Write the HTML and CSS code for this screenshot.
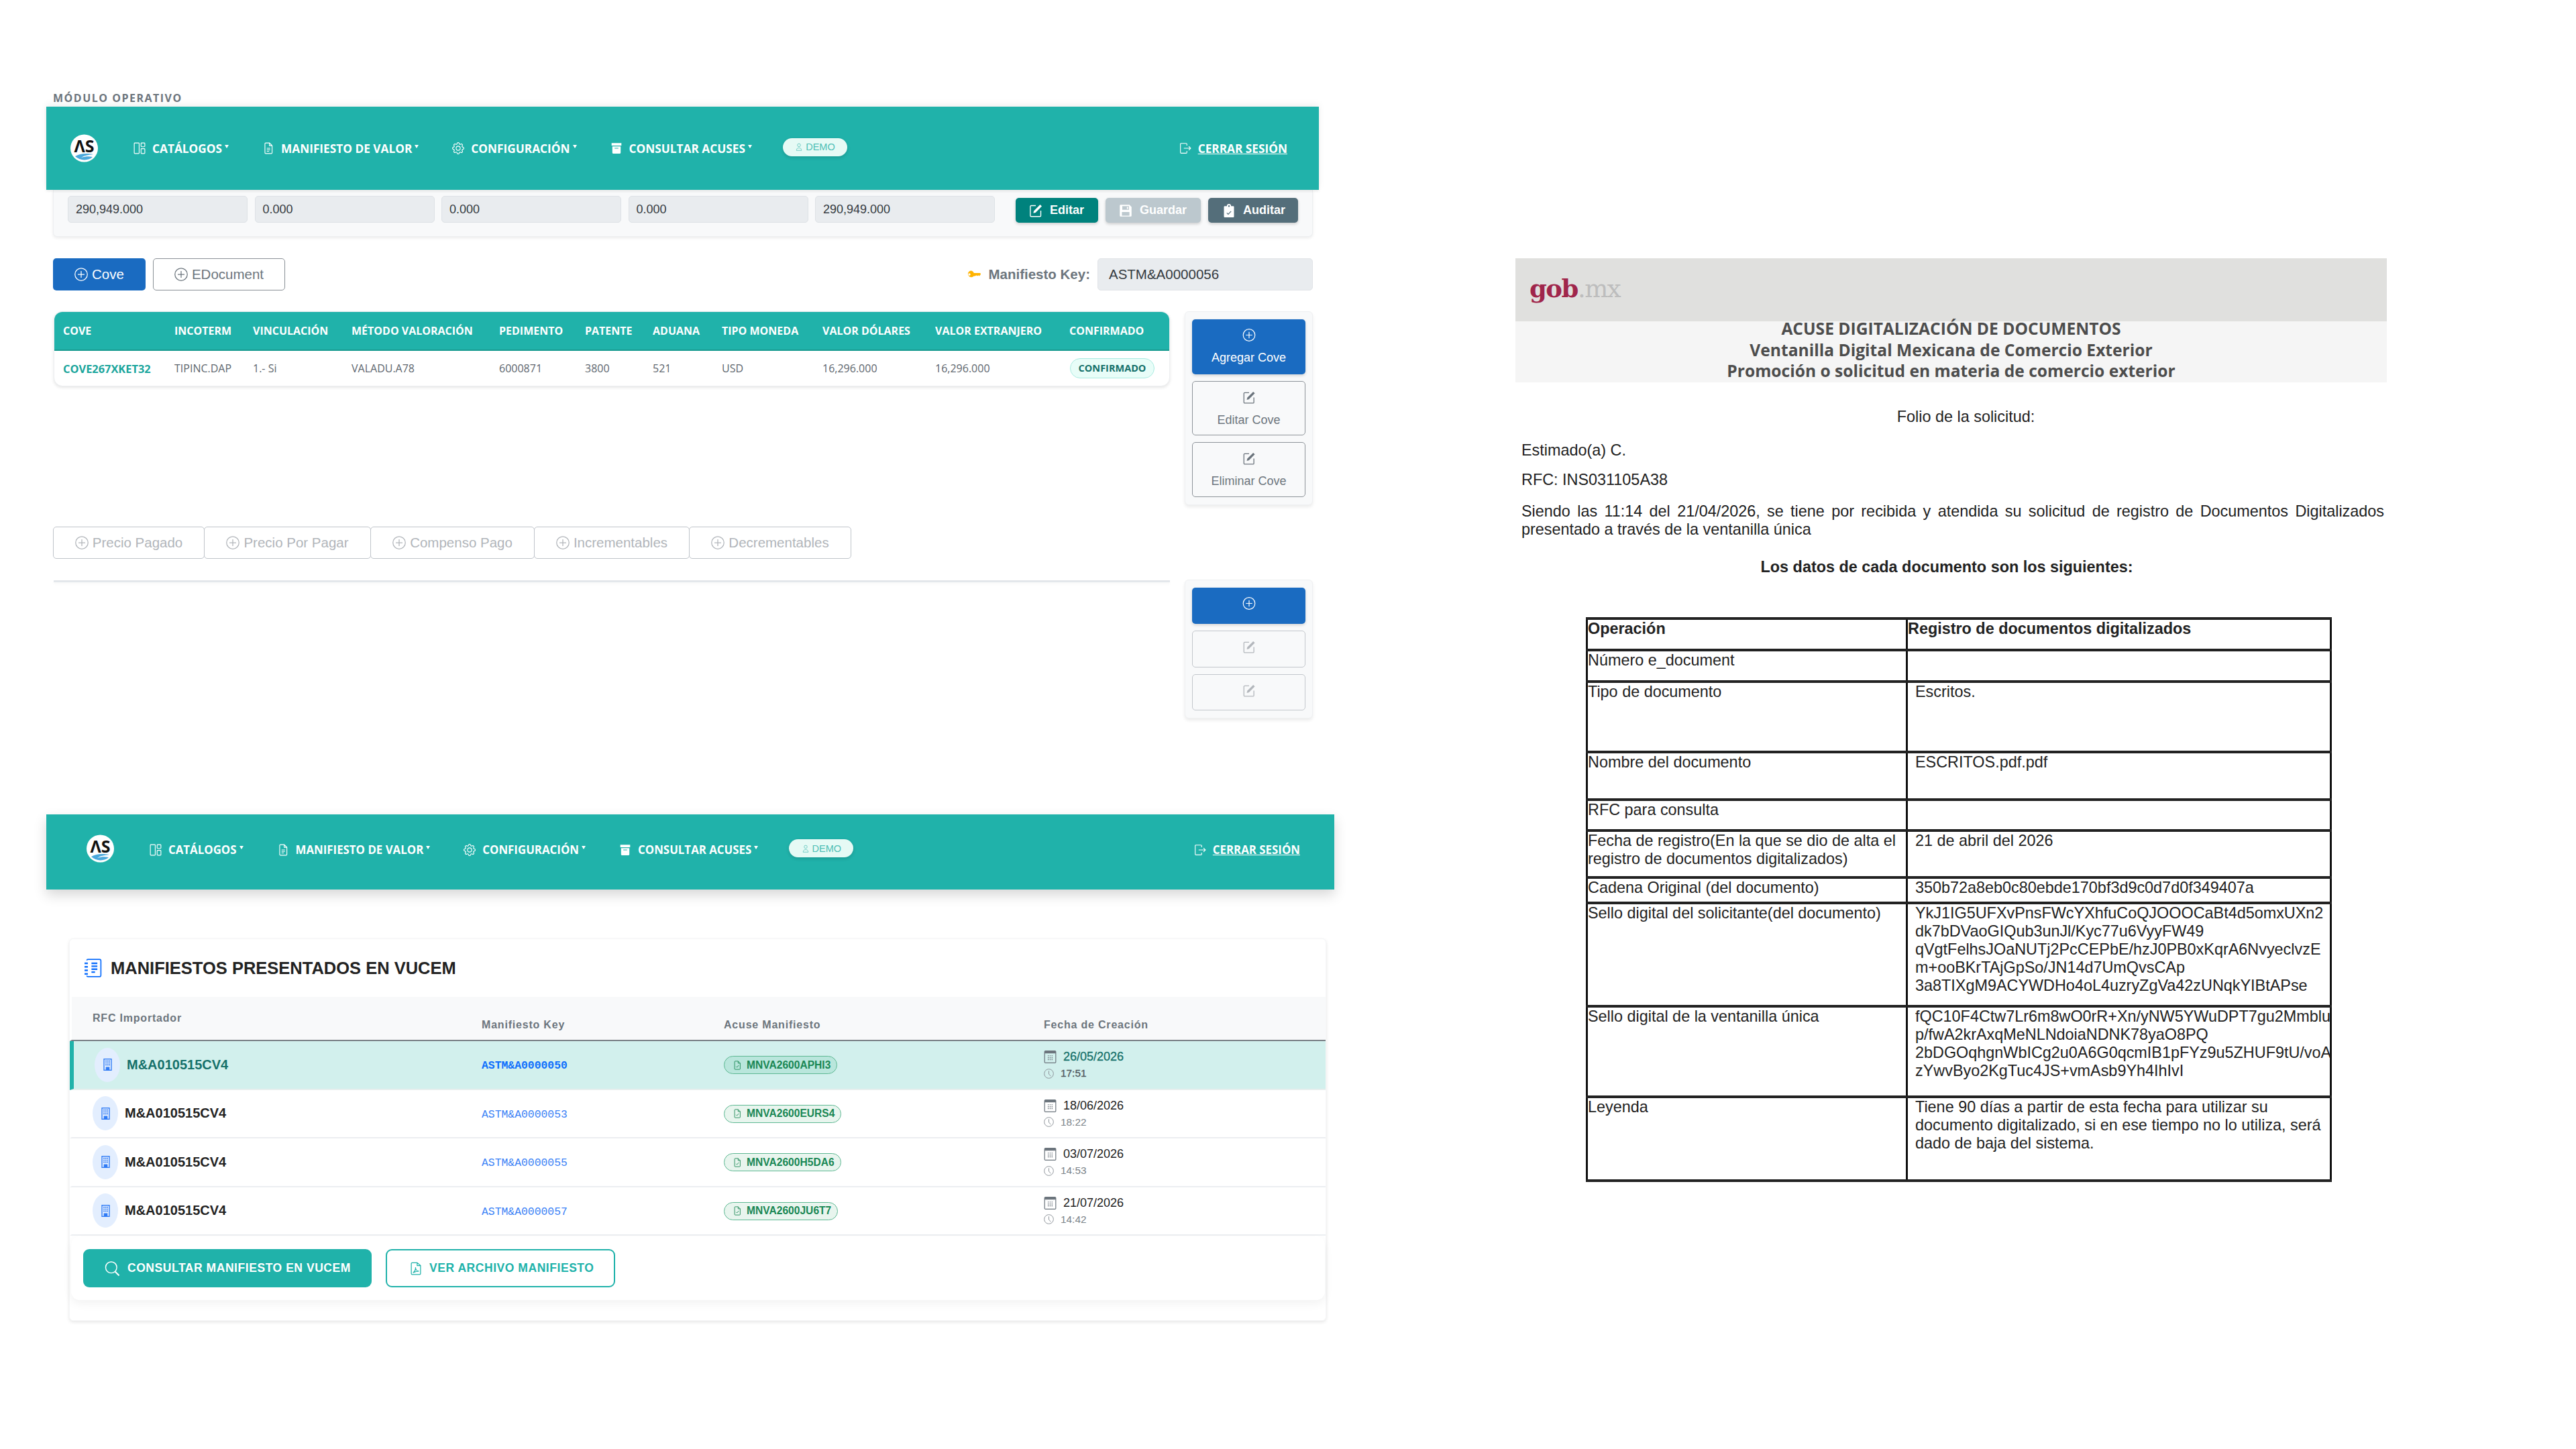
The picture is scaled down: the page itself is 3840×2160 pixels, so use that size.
FILE: index.html
```html
<!DOCTYPE html>
<html lang="es">
<head>
  <meta charset="UTF-8">
  <title>Módulo operativo</title>
  <link rel="stylesheet" href="styles.css">
</head>
<body>
  <svg class="sprite" xmlns="http://www.w3.org/2000/svg">
    <symbol id="i-layout" viewBox="0 0 16 16"><g fill="none" stroke="currentColor" stroke-width="1"><rect x="1" y="1" width="6.5" height="14" rx=".8"/><rect x="10" y="1" width="5" height="5" rx=".8"/><rect x="10" y="8.5" width="5" height="6.5" rx=".8"/></g></symbol>
    <symbol id="i-doc" viewBox="0 0 16 16"><path fill="none" stroke="currentColor" d="M4.500 1h5L13 4.500V14a1 1 0 0 1-1 1H4.500a1 1 0 0 1-1-1V2a1 1 0 0 1 1-1zM9.500 1v3.500H13M6 8h4.500M6 10h4.500M6 12h3"/></symbol>
    <symbol id="i-gear" viewBox="0 0 16 16"><path fill="currentColor" d="M8 4.754a3.246 3.246 0 1 0 0 6.492 3.246 3.246 0 0 0 0-6.492zM5.754 8a2.246 2.246 0 1 1 4.492 0 2.246 2.246 0 0 1-4.492 0z"/><path fill="currentColor" d="M9.796 1.343c-.527-1.79-3.065-1.79-3.592 0l-.094.319a.873.873 0 0 1-1.255.52l-.292-.16c-1.64-.892-3.433.902-2.54 2.541l.159.292a.873.873 0 0 1-.52 1.255l-.319.094c-1.79.527-1.79 3.065 0 3.592l.319.094a.873.873 0 0 1 .52 1.255l-.16.292c-.892 1.64.901 3.434 2.541 2.54l.292-.159a.873.873 0 0 1 1.255.52l.094.319c.527 1.79 3.065 1.79 3.592 0l.094-.319a.873.873 0 0 1 1.255-.52l.292.16c1.64.893 3.434-.902 2.54-2.541l-.159-.292a.873.873 0 0 1 .52-1.255l.319-.094c1.79-.527 1.79-3.065 0-3.592l-.319-.094a.873.873 0 0 1-.52-1.255l.16-.292c.893-1.64-.902-3.433-2.541-2.54l-.292.159a.873.873 0 0 1-1.255-.52l-.094-.319zm-2.633.283c.246-.835 1.428-.835 1.674 0l.094.319a1.873 1.873 0 0 0 2.693 1.115l.291-.16c.764-.415 1.6.42 1.184 1.185l-.159.292a1.873 1.873 0 0 0 1.116 2.692l.318.094c.835.246.835 1.428 0 1.674l-.319.094a1.873 1.873 0 0 0-1.115 2.693l.16.291c.415.764-.42 1.6-1.185 1.184l-.291-.159a1.873 1.873 0 0 0-2.693 1.116l-.094.318c-.246.835-1.428.835-1.674 0l-.094-.319a1.873 1.873 0 0 0-2.692-1.115l-.292.16c-.764.415-1.6-.42-1.184-1.185l.159-.291A1.873 1.873 0 0 0 1.945 8.93l-.319-.094c-.835-.246-.835-1.428 0-1.674l.319-.094A1.873 1.873 0 0 0 3.06 4.377l-.16-.292c-.415-.764.42-1.6 1.185-1.184l.292.159a1.873 1.873 0 0 0 2.692-1.115l.094-.319z"/></symbol>
    <symbol id="i-archive" viewBox="0 0 16 16"><path fill="currentColor" fill-rule="evenodd" d="M1.500 1h13v3.500h-13zM2.500 5.500h11V14a1 1 0 0 1-1 1h-9a1 1 0 0 1-1-1zM5.500 7.500v1h5v-1z"/></symbol>
    <symbol id="i-person" viewBox="0 0 16 16"><g fill="none" stroke="currentColor"><circle cx="8" cy="4.500" r="3"/><path d="M3 15c0-3.400 2-5 5-5s5 1.600 5 5z"/></g></symbol>
    <symbol id="i-logout" viewBox="0 0 16 16"><path fill="none" stroke="currentColor" d="M10 4.500V2.500a1 1 0 0 0-1-1H2.500a1 1 0 0 0-1 1v11a1 1 0 0 0 1 1H9a1 1 0 0 0 1-1v-2M6 8h9M12.500 5.500 15 8l-2.500 2.500"/></symbol>
    <symbol id="i-edit" viewBox="0 0 16 16"><path fill="none" stroke="currentColor" stroke-width="1.100" d="M14 8v6a1 1 0 0 1-1 1H2.500a1 1 0 0 1-1-1V3a1 1 0 0 1 1-1H8"/><path fill="currentColor" d="M13.200.8l2 2-7.500 7.500-2.600.6.600-2.600z"/></symbol>
    <symbol id="i-floppy" viewBox="0 0 16 16"><path fill="currentColor" fill-rule="evenodd" d="M2 1h10.500L15 3.500V14a1 1 0 0 1-1 1H2a1 1 0 0 1-1-1V2a1 1 0 0 1 1-1zM4 2.500V7h8V2.500zM9.500 3.500h1.500v2.500H9.500zM3.500 9.500V14h9V9.500z"/></symbol>
    <symbol id="i-audit" viewBox="0 0 16 16"><path fill="currentColor" fill-rule="evenodd" d="M3 2.500h2.500a2.500 2.500 0 0 1 5 0H13a1 1 0 0 1 1 1V15a1 1 0 0 1-1 1H3a1 1 0 0 1-1-1V3.500a1 1 0 0 1 1-1zM8 1.500a1 1 0 1 0 0 2 1 1 0 0 0 0-2zM5.800 10.300l-.7.7 2 2 3.800-4-.7-.7-3.100 3.300z"/></symbol>
    <symbol id="i-key" viewBox="0 0 16 16"><path fill="currentColor" fill-rule="evenodd" d="M4 3.500a4 4 0 0 1 3.800 2.800H15.500L16 8l-1.800 2-1.200-1-1.200 1-1.200-1-1.200 1H7.800A4 4 0 1 1 4 3.500zM2.800 6.800a1.300 1.300 0 1 0 0 2.500 1.300 1.300 0 0 0 0-2.500z"/></symbol>
    <symbol id="i-plus" viewBox="0 0 16 16"><g fill="none" stroke="currentColor" stroke-width="1"><circle cx="8" cy="8" r="7.400"/><path d="M8 4v8M4 8h8"/></g></symbol>
    <symbol id="i-building" viewBox="0 0 11 16"><rect x=".6" y=".6" width="9.800" height="14.800" fill="none" stroke="currentColor" stroke-width="1.200"/><path fill="currentColor" d="M2.500 2.500h1.500V4H2.500zM4.800 2.500h1.500V4H4.800zM7 2.500h1.500V4H7zM2.500 5h1.500v1.500H2.500zM4.800 5h1.500v1.500H4.800zM7 5h1.500v1.500H7zM2.500 7.500h1.500V9H2.500zM4.800 7.500h1.500V9H4.800zM7 7.500h1.500V9H7zM3 11h5v5H3z"/></symbol>
    <symbol id="i-journal" viewBox="0 0 16 16"><g fill="none" stroke="currentColor" stroke-width="1"><path d="M2.500 1.500A1 1 0 0 1 3.500.6h9.800a1.200 1.200 0 0 1 1.200 1.200v12.400a1.200 1.200 0 0 1-1.200 1.200H3.500a1 1 0 0 1-1-.9"/><path stroke-width="1.300" d="M6.500 4h5M6.500 6.500h5M6.500 9h5M6.500 11.500h3"/><path stroke-width="1.400" d="M.6 4h2.800M.6 7h2.800M.6 10h2.800M.6 13h2.800"/></g></symbol>
    <symbol id="i-filecheck" viewBox="0 0 16 16"><path fill="none" stroke="currentColor" d="M4.500 1h5L13 4.500V14a1 1 0 0 1-1 1H4.500a1 1 0 0 1-1-1V2a1 1 0 0 1 1-1zM9.500 1v3.500H13M6 10l1.500 1.500L10.500 8"/></symbol>
    <symbol id="i-calendar" viewBox="0 0 16 16"><path fill="currentColor" fill-rule="evenodd" d="M2 0h12a1.500 1.500 0 0 1 1.500 1.500v13A1.500 1.500 0 0 1 14 16H2a1.500 1.500 0 0 1-1.500-1.500v-13A1.500 1.500 0 0 1 2 0zM1.500 3.500v11A.5.5 0 0 0 2 15h12a.5.5 0 0 0 .5-.5v-11z"/><path fill="currentColor" d="M5 6h1.200v1.200H5zM7.400 6h1.200v1.200H7.400zM9.800 6H11v1.200H9.800zM5 8.400h1.200v1.200H5zM7.400 8.400h1.200v1.200H7.400zM9.800 8.400H11v1.200H9.800zM5 10.800h1.200V12H5zM7.400 10.800h1.200V12H7.400zM9.800 10.800H11V12H9.800z"/></symbol>
    <symbol id="i-clock" viewBox="0 0 16 16"><g fill="none" stroke="currentColor" stroke-width="1"><circle cx="8" cy="8" r="7.300"/><path d="M8 3.500V8.500l3 3.500"/></g></symbol>
    <symbol id="i-search" viewBox="0 0 16 16"><g fill="none" stroke="currentColor"><circle cx="6.800" cy="6.800" r="5.800"/><path stroke-width="1.500" d="M11 11.300l4 4"/></g></symbol>
    <symbol id="i-pdf" viewBox="0 0 16 16"><path fill="none" stroke="currentColor" d="M3.500 1h6L13.500 4.500V14a1 1 0 0 1-1 1h-9a1 1 0 0 1-1-1V2a1 1 0 0 1 1-1zM9.500 1v3.500h4M4.500 13c2-1 3.500-4 3-6.500 0 3 2 4.500 4 4.500-2.500 0-5 1-7 2z"/></symbol>
    <symbol id="i-logo" viewBox="0 0 41 42"><circle cx="20.500" cy="21" r="20.500" fill="#fff"/><text x="20.500" y="27" text-anchor="middle" font-family="Open Sans" font-size="25" fill="#111">ΛS</text><path d="M7 33c7-4 15-5 27-3-8 1-14 2-18 5 6-2 12-2 17-1-6 6-19 6-26-1z" fill="#4aa8dc"/></symbol>
  </svg>

  <section class="shot shot-operativo">
    <p class="modulo">MÓDULO OPERATIVO</p>
    <header class="nav">
      <svg class="logo"><use href="#i-logo"/></svg>
      <a class="nav-item"><svg class="ni"><use href="#i-layout"/></svg>CATÁLOGOS<i class="caret"></i></a>
      <a class="nav-item"><svg class="ni"><use href="#i-doc"/></svg>MANIFIESTO DE VALOR<i class="caret"></i></a>
      <a class="nav-item"><svg class="ni"><use href="#i-gear"/></svg>CONFIGURACIÓN<i class="caret"></i></a>
      <a class="nav-item ni-acu"><svg class="ni"><use href="#i-archive"/></svg>CONSULTAR ACUSES<i class="caret"></i></a>
      <span class="demo"><svg><use href="#i-person"/></svg>DEMO</span>
      <a class="salir"><svg><use href="#i-logout"/></svg><u>CERRAR SESIÓN</u></a>
    </header>

    <div class="contenido">
      <div class="totales">
        <div class="campo">290,949.000</div>
        <div class="campo">0.000</div>
        <div class="campo">0.000</div>
        <div class="campo">0.000</div>
        <div class="campo">290,949.000</div>
        <div class="totales-btns">
          <button class="btn-top btn-editar"><svg><use href="#i-edit"/></svg>Editar</button>
          <button class="btn-top btn-guardar"><svg><use href="#i-floppy"/></svg>Guardar</button>
          <button class="btn-top btn-auditar"><svg><use href="#i-audit"/></svg>Auditar</button>
        </div>
      </div>

      <div class="acciones">
        <div class="acciones-izq">
          <button class="btn btn-azul"><svg><use href="#i-plus"/></svg>Cove</button>
          <button class="btn btn-linea"><svg><use href="#i-plus"/></svg>EDocument</button>
        </div>
        <div class="key-box">
          <svg class="key-ico"><use href="#i-key"/></svg>
          <label>Manifiesto Key:</label>
          <div class="key-input">ASTM&amp;A0000056</div>
        </div>
      </div>

      <div class="cove-fila">
        <div class="tabla-card">
          <table class="tabla-cove">
            <colgroup><col class="c1"><col class="c2"><col class="c3"><col class="c4"><col class="c5"><col class="c6"><col class="c7"><col class="c8"><col class="c9"><col class="c10"><col class="c11"></colgroup>
            <thead>
              <tr><th>COVE</th><th>INCOTERM</th><th>VINCULACIÓN</th><th>MÉTODO VALORACIÓN</th><th>PEDIMENTO</th><th>PATENTE</th><th>ADUANA</th><th>TIPO MONEDA</th><th>VALOR DÓLARES</th><th>VALOR EXTRANJERO</th><th>CONFIRMADO</th></tr>
            </thead>
            <tbody>
              <tr><td class="cove-id">COVE267XKET32</td><td>TIPINC.DAP</td><td>1.- Si</td><td>VALADU.A78</td><td>6000871</td><td>3800</td><td>521</td><td>USD</td><td>16,296.000</td><td>16,296.000</td><td><span class="confirmado">CONFIRMADO</span></td></tr>
            </tbody>
          </table>
        </div>
        <div class="lado lado-alto">
          <button class="btn-lado btn-lado-azul"><svg><use href="#i-plus"/></svg>Agregar Cove</button>
          <button class="btn-lado"><svg><use href="#i-edit"/></svg>Editar Cove</button>
          <button class="btn-lado"><svg><use href="#i-edit"/></svg>Eliminar Cove</button>
        </div>
      </div>

      <div class="tabs">
        <button class="tab"><svg><use href="#i-plus"/></svg>Precio Pagado</button>
        <button class="tab"><svg><use href="#i-plus"/></svg>Precio Por Pagar</button>
        <button class="tab"><svg><use href="#i-plus"/></svg>Compenso Pago</button>
        <button class="tab"><svg><use href="#i-plus"/></svg>Incrementables</button>
        <button class="tab"><svg><use href="#i-plus"/></svg>Decrementables</button>
      </div>

      <div class="cove-fila">
        <div class="divisor"></div>
        <div class="lado lado-bajo">
          <button class="btn-lado btn-lado-azul btn-solo"><svg><use href="#i-plus"/></svg></button>
          <button class="btn-lado btn-solo btn-off"><svg><use href="#i-edit"/></svg></button>
          <button class="btn-lado btn-solo btn-off"><svg><use href="#i-edit"/></svg></button>
        </div>
      </div>
    </div>
  </section>

  <section class="shot shot-lista">
    <header class="nav nav-chico">
      <svg class="logo"><use href="#i-logo"/></svg>
      <a class="nav-item"><svg class="ni"><use href="#i-layout"/></svg>CATÁLOGOS<i class="caret"></i></a>
      <a class="nav-item"><svg class="ni"><use href="#i-doc"/></svg>MANIFIESTO DE VALOR<i class="caret"></i></a>
      <a class="nav-item"><svg class="ni"><use href="#i-gear"/></svg>CONFIGURACIÓN<i class="caret"></i></a>
      <a class="nav-item ni-acu"><svg class="ni"><use href="#i-archive"/></svg>CONSULTAR ACUSES<i class="caret"></i></a>
      <span class="demo"><svg><use href="#i-person"/></svg>DEMO</span>
      <a class="salir"><svg><use href="#i-logout"/></svg><u>CERRAR SESIÓN</u></a>
    </header>

    <div class="lista-card">
      <h2 class="lista-titulo"><svg><use href="#i-journal"/></svg>MANIFIESTOS PRESENTADOS EN VUCEM</h2>
      <table class="tabla-lista">
        <colgroup><col class="l1"><col class="l2"><col class="l3"><col class="l4"></colgroup>
        <thead>
          <tr><th class="th-rfc">RFC Importador</th><th>Manifiesto Key</th><th>Acuse Manifiesto</th><th>Fecha de Creación</th></tr>
        </thead>
        <tbody>
          <tr class="activa">
            <td><div class="rfc"><span class="avatar"><svg><use href="#i-building"/></svg></span>M&amp;A010515CV4</div></td>
            <td><span class="llave">ASTM&amp;A0000050</span></td>
            <td><span class="acuse"><svg><use href="#i-filecheck"/></svg>MNVA2600APHI3</span></td>
            <td><div class="fecha"><svg><use href="#i-calendar"/></svg>26/05/2026</div><div class="hora"><svg><use href="#i-clock"/></svg>17:51</div></td>
          </tr>
          <tr>
            <td><div class="rfc"><span class="avatar"><svg><use href="#i-building"/></svg></span>M&amp;A010515CV4</div></td>
            <td><span class="llave">ASTM&amp;A0000053</span></td>
            <td><span class="acuse"><svg><use href="#i-filecheck"/></svg>MNVA2600EURS4</span></td>
            <td><div class="fecha"><svg><use href="#i-calendar"/></svg>18/06/2026</div><div class="hora"><svg><use href="#i-clock"/></svg>18:22</div></td>
          </tr>
          <tr>
            <td><div class="rfc"><span class="avatar"><svg><use href="#i-building"/></svg></span>M&amp;A010515CV4</div></td>
            <td><span class="llave">ASTM&amp;A0000055</span></td>
            <td><span class="acuse"><svg><use href="#i-filecheck"/></svg>MNVA2600H5DA6</span></td>
            <td><div class="fecha"><svg><use href="#i-calendar"/></svg>03/07/2026</div><div class="hora"><svg><use href="#i-clock"/></svg>14:53</div></td>
          </tr>
          <tr>
            <td><div class="rfc"><span class="avatar"><svg><use href="#i-building"/></svg></span>M&amp;A010515CV4</div></td>
            <td><span class="llave">ASTM&amp;A0000057</span></td>
            <td><span class="acuse"><svg><use href="#i-filecheck"/></svg>MNVA2600JU6T7</span></td>
            <td><div class="fecha"><svg><use href="#i-calendar"/></svg>21/07/2026</div><div class="hora"><svg><use href="#i-clock"/></svg>14:42</div></td>
          </tr>
        </tbody>
      </table>
      <div class="lista-pie">
        <button class="btn-pie btn-pie-lleno"><svg><use href="#i-search"/></svg>CONSULTAR MANIFIESTO EN VUCEM</button>
        <button class="btn-pie btn-pie-linea"><svg><use href="#i-pdf"/></svg>VER ARCHIVO MANIFIESTO</button>
      </div>
    </div>
  </section>

  <section class="shot shot-acuse">
    <div class="gob-banda"><span class="gob">gob<span class="mx">.mx</span></span></div>
    <div class="acuse-titulos">
      <p>ACUSE DIGITALIZACIÓN DE DOCUMENTOS</p>
      <p>Ventanilla Digital Mexicana de Comercio Exterior</p>
      <p>Promoción o solicitud en materia de comercio exterior</p>
    </div>
    <div class="acuse-cuerpo">
      <p class="folio">Folio de la solicitud:</p>
      <p class="estimado">Estimado(a) C.</p>
      <p class="rfc-linea">RFC: INS031105A38</p>
      <p class="parrafo">Siendo las 11:14 del 21/04/2026, se tiene por recibida y atendida su solicitud de registro de Documentos Digitalizados presentado a través de la ventanilla única</p>
      <p class="datos">Los datos de cada documento son los siguientes:</p>
      <table class="tabla-doc">
        <colgroup><col class="d1"><col class="d2"></colgroup>
        <tr class="h47"><th>Operación</th><th class="th-reg">Registro de documentos digitalizados</th></tr>
        <tr class="h47"><td>Número e_document</td><td></td></tr>
        <tr class="h105"><td>Tipo de documento</td><td>Escritos.</td></tr>
        <tr class="h71"><td>Nombre del documento</td><td>ESCRITOS.pdf.pdf</td></tr>
        <tr class="h46"><td>RFC para consulta</td><td></td></tr>
        <tr class="h70"><td>Fecha de registro(En la que se dio de alta el registro de documentos digitalizados)</td><td>21 de abril del 2026</td></tr>
        <tr class="h38"><td>Cadena Original (del documento)</td><td>350b72a8eb0c80ebde170bf3d9c0d7d0f349407a</td></tr>
        <tr class="h154"><td>Sello digital del solicitante(del documento)</td><td class="sello">YkJ1IG5UFXvPnsFWcYXhfuCoQJOOOCaBt4d5omxUXn2<br>dk7bDVaoGIQub3unJl/Kyc77u6VyyFW49<br>qVgtFelhsJOaNUTj2PcCEPbE/hzJ0PB0xKqrA6NvyeclvzE<br>m+ooBKrTAjGpSo/JN14d7UmQvsCAp<br>3a8TIXgM9ACYWDHo4oL4uzryZgVa42zUNqkYIBtAPse</td></tr>
        <tr class="h135"><td>Sello digital de la ventanilla única</td><td class="sello">fQC10F4Ctw7Lr6m8wO0rR+Xn/yNW5YWuDPT7gu2Mmblu<br>p/fwA2krAxqMeNLNdoiaNDNK78yaO8PQ<br>2bDGOqhgnWbICg2u0A6G0qcmIB1pFYz9u5ZHUF9tU/voA<br>zYwvByo2KgTuc4JS+vmAsb9Yh4IhIvI</td></tr>
        <tr class="h125"><td>Leyenda</td><td>Tiene 90 días a partir de esta fecha para utilizar su documento digitalizado, si en ese tiempo no lo utiliza, será dado de baja del sistema.</td></tr>
      </table>
    </div>
  </section>
</body>
</html>
```

FILE: styles.css
```css
* {
  box-sizing: border-box;
}

body {
  position: relative;
  width: 3840px;
  height: 2160px;
  margin: 0;
  background-color: #fff;
  font-family: "Liberation Sans", Arial, sans-serif;
  color: #333;
  overflow: hidden;
}

p, h2 {
  margin: 0;
}

button {
  font-family: inherit;
  cursor: pointer;
}

.sprite {
  display: none;
}

/* the three captures sit on a blank canvas */
.shot {
  position: absolute;
}

.shot-operativo {
  left: 69px;
  top: 134px;
  width: 1897px;
}

.shot-lista {
  left: 69px;
  top: 1214px;
  width: 1920px;
}

.shot-acuse {
  left: 2259px;
  top: 385px;
  width: 1299px;
}

.modulo {
  height: 25px;
  padding-left: 10px;
  font-family: "Open Sans", sans-serif;
  font-size: 16px;
  font-weight: 700;
  line-height: 24px;
  letter-spacing: 1.5px;
  color: #6c757d;
}

/* nav */
.nav {
  position: relative;
  z-index: 2;
  display: flex;
  align-items: center;
  height: 124px;
  padding: 0 47px 0 36px;
  background-color: #20b2aa;
  color: #fff;
  font-family: "Open Sans", sans-serif;
  font-weight: 700;
  font-size: 17.25px;
  box-shadow: 0 -4px 10px rgba(0, 0, 0, 0.06), 0 2px 4px rgba(0, 0, 0, 0.08);
}

.nav-chico {
  align-items: flex-start;
  height: 112px;
  padding: 41px 51px 0 60px;
  font-size: 16.85px;
  box-shadow: 0 8px 18px rgba(0, 0, 0, 0.16);
}

.logo {
  width: 41px;
  height: 42px;
  flex: none;
  margin-right: 53px;
}

.nav-chico .logo {
  margin-top: -11px;
}

.nav-item {
  display: flex;
  align-items: center;
  margin-right: 50px;
  white-space: nowrap;
}

.ni-acu {
  margin-right: 46px;
}

.ni {
  width: 18px;
  height: 18px;
  margin-right: 10px;
}

.caret {
  width: 0;
  height: 0;
  margin: -6px 0 0 4px;
  border-left: 3px solid transparent;
  border-right: 3px solid transparent;
  border-top: 5px solid #fff;
}

.demo {
  display: flex;
  align-items: center;
  justify-content: center;
  gap: 4px;
  width: 96px;
  height: 27px;
  margin-top: -4px;
  border-radius: 14px;
  background-color: #e6faf5;
  color: #4fbfb5;
  font-family: "Liberation Sans", sans-serif;
  font-weight: 400;
  font-size: 14.5px;
  box-shadow: 0 2px 5px rgba(0, 0, 0, 0.15);
}

.demo svg {
  width: 12px;
  height: 14px;
}

.salir {
  display: flex;
  align-items: center;
  gap: 10px;
  margin-left: auto;
}

.salir svg {
  width: 18px;
  height: 18px;
}

/* top panel */
.contenido {
  padding: 0 9px 0 10px;
}

.totales {
  display: flex;
  align-items: flex-start;
  gap: 10.5px;
  height: 70px;
  padding: 9px 21px 0 21px;
  background-color: #f8f9fa;
  border: 1px solid #edeff1;
  border-top: 0;
  border-radius: 0 0 6px 6px;
  box-shadow: 0 2px 4px rgba(0, 0, 0, 0.08);
}

.campo {
  width: 268px;
  height: 40px;
  padding: 0 11px;
  background-color: #e9ecef;
  border: 1px solid #dee2e6;
  border-radius: 5px;
  font-size: 18px;
  line-height: 38px;
  color: #343a40;
}

.totales-btns {
  display: flex;
  gap: 11px;
  margin-top: 3px;
  margin-left: auto;
}

.btn-top {
  display: flex;
  align-items: center;
  height: 37px;
  border: 0;
  border-radius: 5px;
  font-size: 18px;
  font-weight: 700;
  color: #fff;
  box-shadow: 0 2px 4px rgba(0, 0, 0, 0.18);
}

.btn-top svg {
  width: 20px;
  height: 20px;
  margin-right: 11px;
}

.btn-editar {
  width: 123px;
  padding-left: 20px;
  background-color: #00827d;
}

.btn-guardar {
  width: 142px;
  padding-left: 20px;
  background-color: #bcc8ce;
}

.btn-auditar {
  width: 134px;
  padding-left: 21px;
  background-color: #546e7a;
}

.acciones {
  display: flex;
  justify-content: space-between;
  align-items: center;
  margin-top: 32px;
}

.acciones-izq {
  display: flex;
  gap: 11px;
}

.btn {
  display: flex;
  align-items: center;
  justify-content: center;
  gap: 6px;
  height: 48px;
  border-radius: 5px;
  font-size: 20.5px;
}

.btn svg {
  width: 20px;
  height: 20px;
}

.btn-azul {
  width: 138px;
  border: 0;
  background-color: #1a6bc1;
  color: #fff;
}

.btn-linea {
  width: 197px;
  border: 1.5px solid #8a9096;
  background-color: #fff;
  color: #6c757d;
}

.key-box {
  display: flex;
  align-items: center;
}

.key-ico {
  width: 20px;
  height: 20px;
  margin-right: 12px;
  color: #ffb300;
}

.key-box label {
  margin-right: 11px;
  font-size: 20.5px;
  font-weight: 700;
  color: #6c757d;
}

.key-input {
  width: 321px;
  height: 48px;
  padding: 0 16px;
  background-color: #e9ecef;
  border: 1px solid #e1e4e8;
  border-radius: 5px;
  font-size: 20.5px;
  line-height: 46px;
  color: #343a40;
}

.cove-fila {
  display: grid;
  grid-template-columns: 1664px 191px;
  column-gap: 22px;
  align-items: start;
  margin-top: 31px;
  padding-left: 1px;
}

.tabla-card {
  height: 112px;
  background-color: #fff;
  border: 1px solid #eceef0;
  border-radius: 13px;
  box-shadow: 0 2px 4px rgba(0, 0, 0, 0.1);
  overflow: hidden;
}

.tabla-cove {
  width: 1663px;
  table-layout: fixed;
  border-collapse: collapse;
  font-family: "Open Sans", sans-serif;
}

.c1 { width: 166px; }
.c2 { width: 117px; }
.c3 { width: 147px; }
.c4 { width: 220px; }
.c5 { width: 128px; }
.c6 { width: 101px; }
.c7 { width: 103px; }
.c8 { width: 150px; }
.c9 { width: 168px; }
.c10 { width: 200px; }
.c11 { width: 163px; }

.tabla-cove th {
  height: 57px;
  padding: 0 0 0 13px;
  background-color: #20b2aa;
  border-bottom: 2px solid #179a90;
  color: #fff;
  font-size: 16px;
  text-align: left;
  white-space: nowrap;
}

.tabla-cove td {
  height: 53px;
  padding: 0 0 0 13px;
  font-size: 16px;
  color: #5d666e;
  white-space: nowrap;
}

.tabla-cove .cove-id {
  font-size: 16.4px;
  font-weight: 700;
  color: #1aa59c;
}

.confirmado {
  display: inline-block;
  width: 126px;
  height: 30px;
  margin-left: 1px;
  border: 1.5px solid #a8ebe0;
  border-radius: 15px;
  background-color: #e8fdf8;
  font-size: 14.5px;
  font-weight: 700;
  line-height: 27px;
  text-align: center;
  color: #15706a;
}

.lado {
  display: flex;
  flex-direction: column;
  gap: 10px;
  padding: 11px 10px;
  background-color: #f8f9fa;
  border: 1px solid #eff0f2;
  border-radius: 6px;
  box-shadow: 0 3px 5px rgba(0, 0, 0, 0.08);
}

.lado-alto {
  height: 289px;
}

.lado-bajo {
  height: 207px;
}

.btn-lado {
  display: flex;
  flex-direction: column;
  align-items: center;
  gap: 14px;
  height: 82px;
  padding: 14px 0 0;
  background-color: #f8f9fa;
  border: 1.5px solid #8d9399;
  border-radius: 5px;
  font-size: 18px;
  color: #6c757d;
}

.btn-lado svg {
  width: 20px;
  height: 19px;
}

.btn-lado-azul {
  border: 0;
  background-color: #1a6bc1;
  color: #fff;
  box-shadow: 0 2px 4px rgba(0, 0, 0, 0.15);
}

.btn-solo {
  height: 54.5px;
}

.btn-off {
  border-color: #c3c7cc;
  color: #b3b7bc;
}

.tabs {
  display: flex;
  margin-top: 32px;
}

.tab {
  display: flex;
  align-items: center;
  justify-content: center;
  gap: 6px;
  width: 226px;
  height: 48px;
  margin-right: -1px;
  background-color: #fff;
  border: 1.5px solid #bfc4ca;
  border-radius: 5px;
  font-size: 20.5px;
  color: #b1b5ba;
  white-space: nowrap;
}

.tab:nth-child(2) { width: 249px; }
.tab:nth-child(3) { width: 245px; }
.tab:nth-child(4) { width: 232px; }
.tab:nth-child(5) { width: 242px; }

.tab svg {
  width: 20px;
  height: 20px;
}

.divisor {
  height: 3px;
  margin-top: 1px;
  background-color: #e3e7eb;
  box-shadow: 0 2px 4px rgba(0, 0, 0, 0.04);
}

/* list panel */
.lista-card {
  position: relative;
  height: 570px;
  margin: 73px 12px 0 34px;
  background-color: #fff;
  border: 1px solid #f5f6f7;
  border-radius: 6px;
  box-shadow: 0 2px 5px rgba(0, 0, 0, 0.1);
}

.lista-titulo {
  display: flex;
  align-items: center;
  gap: 12px;
  height: 86px;
  padding: 0 0 0 21px;
  font-size: 25.5px;
  font-weight: 700;
  color: #222;
}

.lista-titulo svg {
  width: 28px;
  height: 30px;
  color: #0d6efd;
}

.tabla-lista {
  width: 1872px;
  table-layout: fixed;
  border-collapse: separate;
  border-spacing: 0;
}

.l1 { width: 614px; }
.l2 { width: 361px; }
.l3 { width: 477px; }
.l4 { width: 420px; }

.tabla-lista th {
  height: 66px;
  padding: 20px 0 0;
  background-color: #f8f9fa;
  border-bottom: 2px solid #7a8087;
  font-size: 16px;
  font-weight: 700;
  letter-spacing: 0.8px;
  text-align: left;
  color: #6c757d;
}

.tabla-lista th:first-child,
.tabla-lista td:first-child {
  border-left: 3px solid transparent;
  background-clip: padding-box;
  padding-left: 31px;
}

.tabla-lista .th-rfc {
  padding-top: 0;
}

.tabla-lista td {
  height: 72.5px;
  padding: 0;
  border-bottom: 2px solid #eceef1;
}

.rfc {
  display: flex;
  align-items: center;
  gap: 10px;
  font-size: 20px;
  font-weight: 700;
  color: #222;
}

.avatar {
  display: flex;
  align-items: center;
  justify-content: center;
  width: 38px;
  height: 51px;
  border-radius: 50%;
  background-color: #e3eefe;
  color: #2f7bf6;
}

.avatar svg {
  width: 13px;
  height: 18px;
}

.llave {
  display: inline-block;
  margin-top: 3px;
  font-family: "Liberation Mono", monospace;
  font-size: 16.4px;
  color: #3b82f6;
}

.acuse {
  display: inline-flex;
  align-items: center;
  gap: 7px;
  height: 27px;
  margin-top: 1px;
  padding: 0 9px 0 12px;
  border: 1.5px solid #5db892;
  border-radius: 14px;
  background-color: #e8f5ee;
  font-size: 15.6px;
  font-weight: 700;
  color: #198754;
}

.acuse svg {
  width: 14px;
  height: 18px;
}

.fecha,
.hora {
  display: flex;
  align-items: center;
}

.fecha {
  gap: 10px;
  font-size: 18px;
  color: #222;
}

.fecha svg {
  width: 19px;
  height: 19px;
  color: #6c757d;
}

.hora {
  gap: 10px;
  margin-top: 5px;
  font-size: 15.4px;
  color: #7a8288;
}

.hora svg {
  width: 15px;
  height: 15px;
  color: #8a9096;
}

.activa td {
  background-color: #d2f0ed;
  border-bottom-color: #e6eeed;
}

.tabla-lista .activa td:first-child {
  border-left: 6px solid #20b2aa;
}

.activa .rfc {
  color: #15706a;
}

.activa .llave {
  font-weight: 700;
  color: #0d6efd;
}

.activa .acuse {
  background-color: #b9e6dc;
}

.activa .fecha {
  color: #15706a;
  -webkit-text-stroke: 0.3px #15706a;
}

.activa .hora {
  color: #4d555b;
  -webkit-text-stroke: 0.3px #4d555b;
}

.lista-pie {
  display: flex;
  gap: 21px;
  position: absolute;
  left: 2px;
  top: 443px;
  width: 1869px;
  height: 95px;
  padding: 19px 18px;
  background-color: #fff;
  border-radius: 13px;
  box-shadow: 0 6px 14px rgba(0, 0, 0, 0.05);
}

.btn-pie {
  display: flex;
  align-items: center;
  height: 57px;
  border-radius: 9px;
  font-size: 17.5px;
  font-weight: 700;
  letter-spacing: 0.55px;
}

.btn-pie-lleno {
  width: 430px;
  padding-left: 32px;
  border: 0;
  background-color: #20b2aa;
  color: #fff;
}

.btn-pie-lleno svg {
  width: 23px;
  height: 24px;
  margin-right: 11px;
}

.btn-pie-linea {
  width: 342px;
  padding-left: 33px;
  border: 2px solid #20b2aa;
  background-color: #fff;
  color: #20b2aa;
}

.btn-pie-linea svg {
  width: 20px;
  height: 24px;
  margin-right: 10px;
}

/* acuse document */
.gob-banda {
  display: flex;
  align-items: center;
  height: 94px;
  padding: 0 0 4px 21px;
  background-color: #e0e0de;
}

.gob {
  font-family: "DejaVu Serif", serif;
  font-size: 37px;
  font-weight: 700;
  letter-spacing: -1.5px;
  color: #a0264b;
}

.mx {
  font-weight: 400;
  color: #bdbdbd;
}

.acuse-titulos {
  display: flow-root;
  height: 91px;
  background-color: #f5f5f5;
  font-family: "Open Sans", sans-serif;
  font-size: 24.6px;
  font-weight: 700;
  line-height: 31.5px;
  text-align: center;
  color: #4d4d4d;
}

.acuse-titulos p:first-child {
  margin-top: -5px;
}

.acuse-cuerpo {
  padding-left: 9px;
  font-size: 23.4px;
  line-height: 27px;
  color: #222;
}

.folio {
  margin-top: 38px;
  padding-left: 35px;
  text-align: center;
}

.estimado {
  margin-top: 23px;
}

.rfc-linea {
  margin-top: 17px;
}

.parrafo {
  width: 1286px;
  margin-top: 20px;
  text-align: justify;
}

.datos {
  margin-top: 29px;
  padding-right: 22px;
  font-weight: 700;
  text-align: center;
}

.tabla-doc {
  width: 1109px;
  margin: 61px 0 0 96px;
  table-layout: fixed;
  border-collapse: collapse;
}

.d1 { width: 477px; }
.d2 { width: 632px; }

.tabla-doc th,
.tabla-doc td {
  padding: 0 0 0 11px;
  border-top: 4px solid #222;
  border-bottom: 4px solid #222;
  border-left: 3px solid #111;
  border-right: 3px solid #111;
  vertical-align: top;
  text-align: left;
  overflow: hidden;
}

.tabla-doc th:first-child,
.tabla-doc td:first-child,
.tabla-doc .th-reg {
  padding-left: 0;
}

.sello {
  white-space: nowrap;
}

.h47 { height: 47px; }
.h105 { height: 105px; }
.h71 { height: 71px; }
.h46 { height: 46px; }
.h70 { height: 70px; }
.h38 { height: 38px; }
.h154 { height: 154px; }
.h135 { height: 135px; }
.h125 { height: 125px; }
```
